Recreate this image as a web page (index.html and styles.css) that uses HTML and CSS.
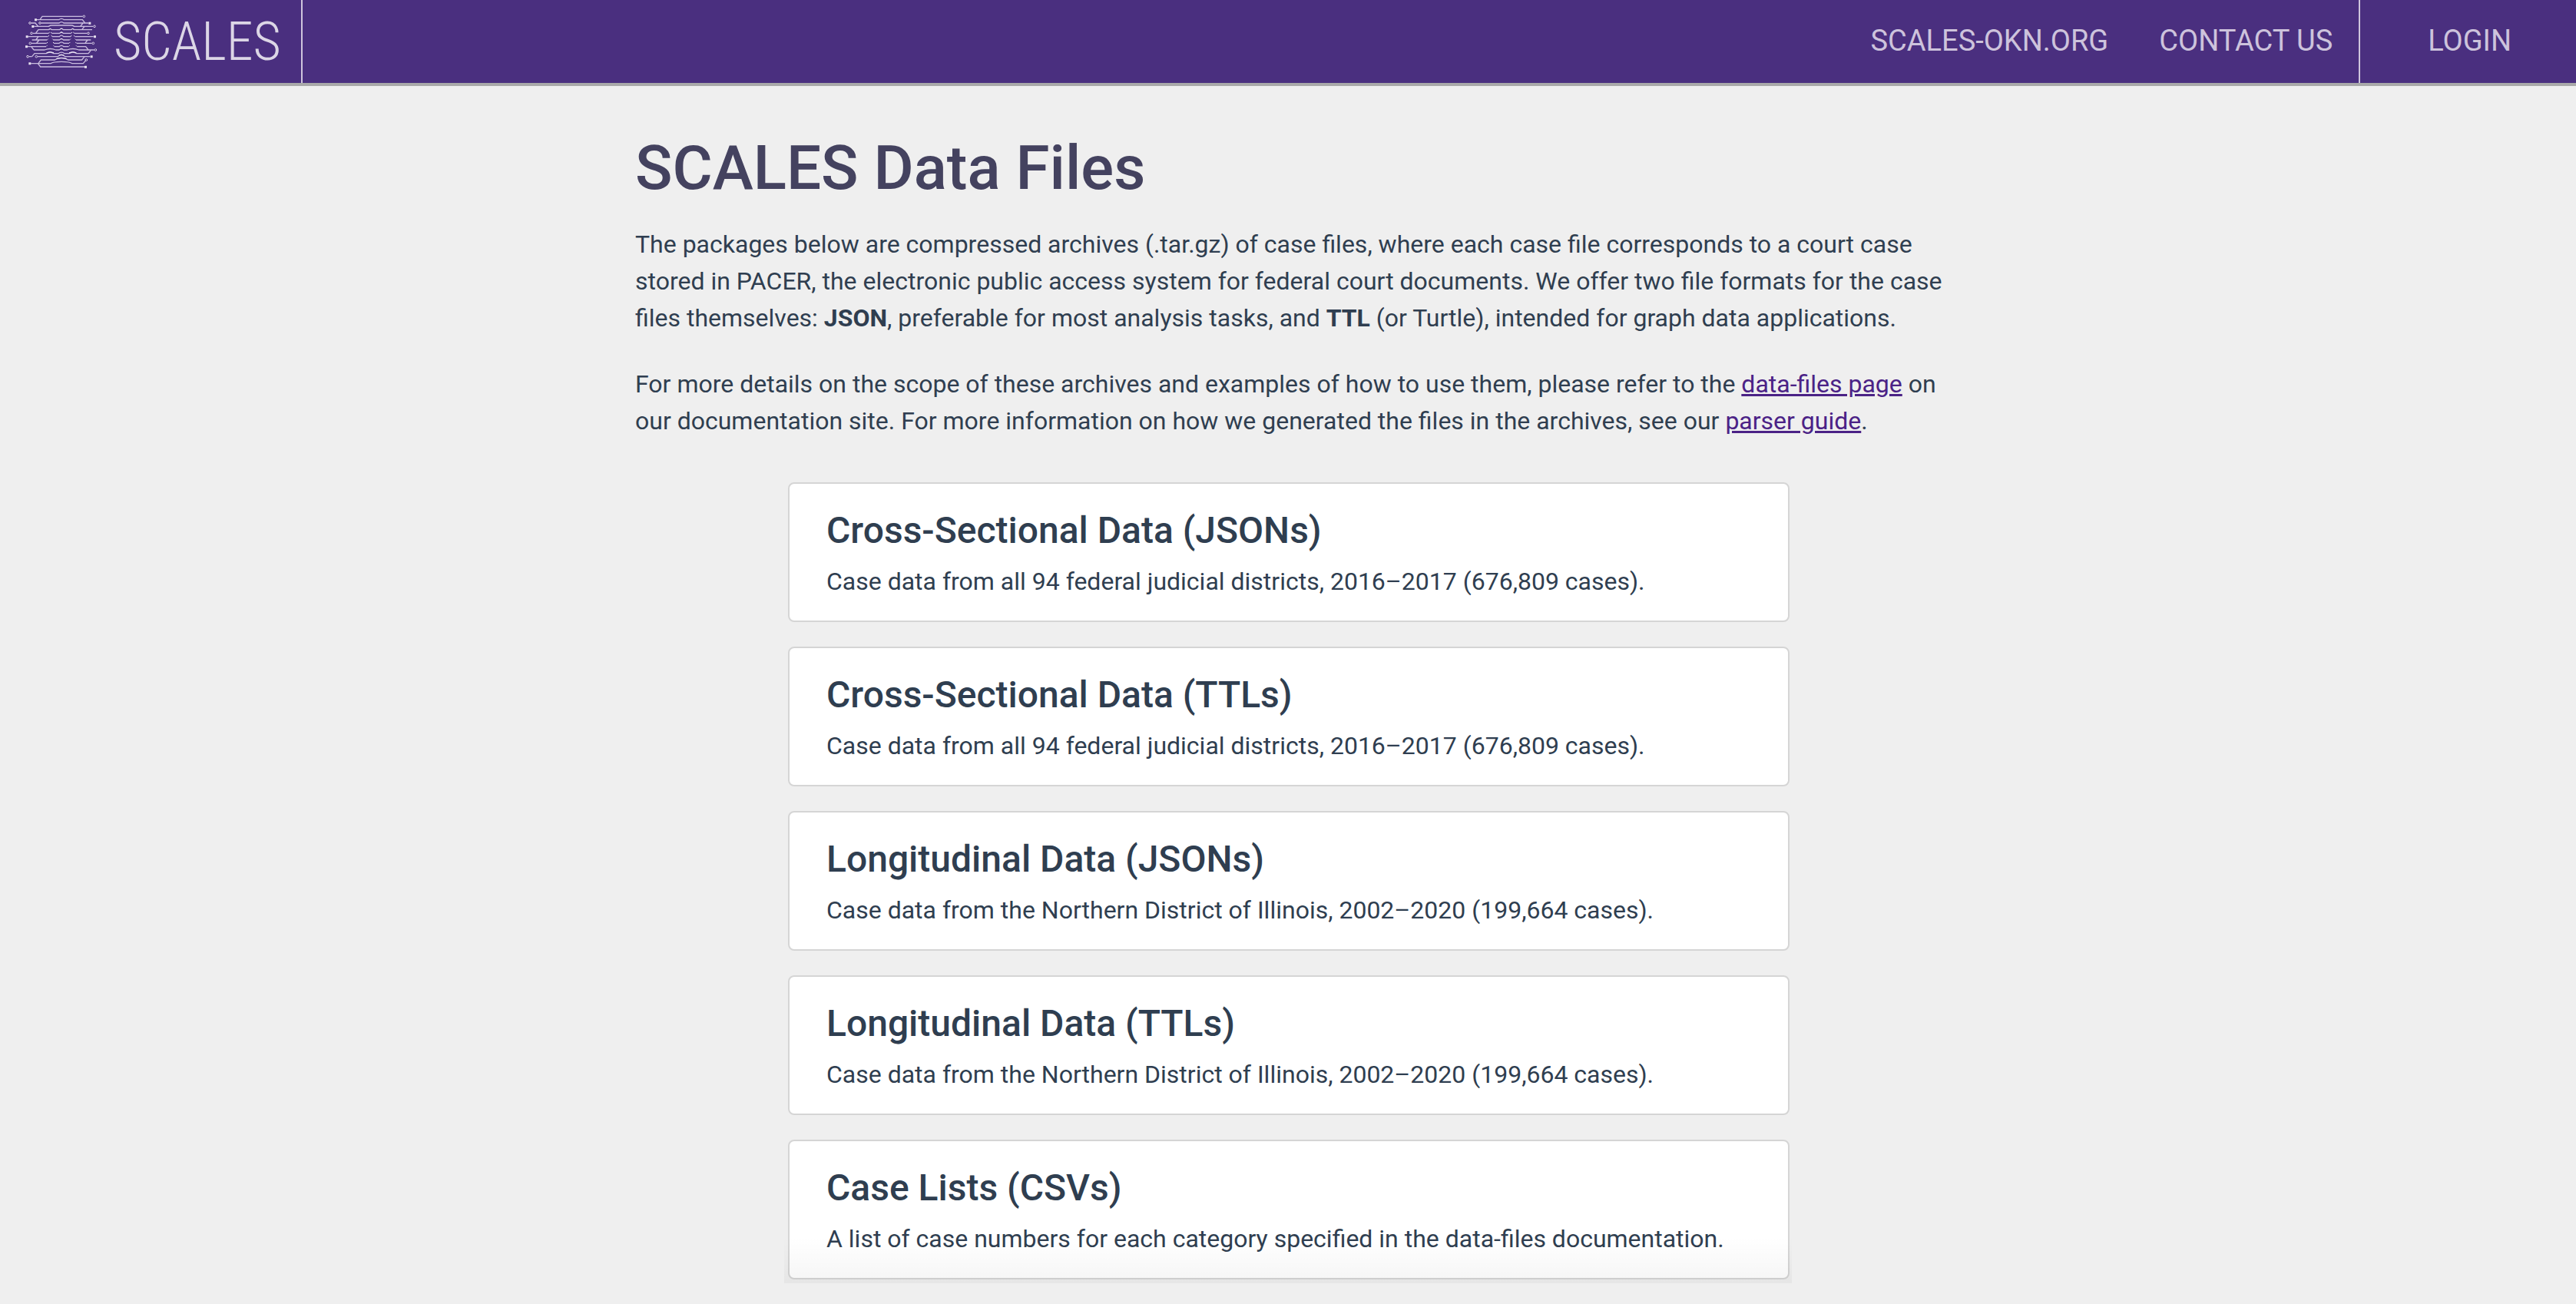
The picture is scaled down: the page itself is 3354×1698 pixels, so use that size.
FILE: index.html
```html
<!DOCTYPE html>
<html lang="en">
<head>
<meta charset="utf-8">
<title>SCALES Data Files</title>
<link rel="stylesheet" href="styles.css">
</head>
<body>
<header class="topbar">
  <a class="brand" href="#">
    <svg class="brand-mark" viewBox="96 50 288 216" aria-hidden="true">
      <g class="trace">
        <path d="M156 73l9-13h158"/>
        <path d="M144 73h86q10-8 20 0h72l10 13"/>
        <path d="M122 86h16l11 13"/>
        <path d="M161 86h70q9-8 18 0h96"/>
        <path d="M133 99h57q6-4 12-4h76q6 0 12 4h24l10-13M290 99h73"/>
        <path d="M140 125l10-13h40q6-8 12 0h31q7-9 14 0h31q6-8 12 0h70M320 112l10-13"/>
        <path d="M128 126h62M202 126h31q7-9 14 0h31M290 126h50"/>
        <path d="M110 139h77M204 139h28q8-9 16 0h28M293 139h72M150 139l-10 13"/>
        <path d="M125 152h59M208 152h24q8-8 16 0h24M297 152h58M143 164l10-12M342 152l-9 12"/>
        <path d="M123 165h59M210 165h21q9-9 18 0h21M299 165h60"/>
        <path d="M108 178h72M212 178h19q9-8 18 0h19M301 178h34l10 13M122 178l10 13"/>
        <path d="M132 191h42q22-9 44 0h13q9-7 18 0h13q22-9 46 0h60"/>
        <path d="M125 217l10-12h45q15-10 30 0h18q12-9 24 0h18q15-10 30 0h45l10-13"/>
        <path d="M113 217h12M147 217h78q15-12 30 0h97"/>
        <path d="M150 243l10-13h54q10-7 26-7t26 7h54l10-13"/>
        <path d="M121 244h77q8-7 42-7t42 7h43l10-12"/>
        <path d="M148 244l10 13h172"/>
      </g>
      <g class="shade">
        <path d="M193 111q3-5 6 0M281 111q3-5 6 0M190 125l4-3M202 125l-4-3M278 125l4-3M290 125l-4-3M188 138l4-3M204 138l-4-3M276 138l4-3M292 138l-4-3M185 151l3-3M208 151l-3-3M273 151l3-3M296 151l-3-3M183 164l3-3M210 164l-3-3M271 164l3-3M298 164l-3-3M181 177l3-3M212 177l-3-3M269 177l3-3M300 177l-3-3"/>
        <path d="M182 202q14-6 28 0M270 202q14-6 28 0M220 225q20-6 40 0M236 110q4-5 8 0M236 124q4-5 8 0M236 149q4-5 8 0M235 187q5-4 10 0M230 212q10-6 20 0"/>
      </g>
      <g class="ring">
        <circle cx="328" cy="60" r="4"/><circle cx="117" cy="86" r="4"/><circle cx="156" cy="86" r="4"/>
        <circle cx="369" cy="99" r="4"/><circle cx="123" cy="126" r="4"/><circle cx="345" cy="126" r="4"/>
        <circle cx="118" cy="165" r="4"/><circle cx="364" cy="165" r="4"/><circle cx="373" cy="191" r="4"/>
        <circle cx="108" cy="217" r="4"/><circle cx="142" cy="217" r="4"/><circle cx="337" cy="230" r="4"/>
      </g>
      <path class="pad" d="M135 69h9v9h-9zM346 82h9v9h-9zM124 95h9v9h-9zM101 135h9v9h-9zM366 135h9v9h-9zM99 174h9v9h-9zM353 213h9v9h-9zM112 240h9v9h-9zM330 253h9v9h-9z"/>
    </svg>
    <span class="brand-name">SCALES</span>
  </a>
  <nav class="nav">
    <a href="#">SCALES-OKN.ORG</a>
    <a href="#">CONTACT US</a>
    <a class="login" href="#">LOGIN</a>
  </nav>
</header>
<main class="page">
  <h1>SCALES Data Files</h1>
  <p>The packages below are compressed archives (.tar.gz) of case files, where each case file corresponds to a court case stored in PACER, the electronic public access system for federal court documents. We offer two file formats for the case files themselves: <strong>JSON</strong>, preferable for most analysis tasks, and <strong>TTL</strong> (or Turtle), intended for graph data applications.</p>
  <p>For more details on the scope of these archives and examples of how to use them, please refer to the <a href="#">data-files page</a> on our documentation site. For more information on how we generated the files in the archives, see our <a href="#">parser guide</a>.</p>
  <section class="files">
    <article class="card">
      <h2>Cross-Sectional Data (JSONs)</h2>
      <p>Case data from all 94 federal judicial districts, 2016–2017 (676,809 cases).</p>
    </article>
    <article class="card">
      <h2>Cross-Sectional Data (TTLs)</h2>
      <p>Case data from all 94 federal judicial districts, 2016–2017 (676,809 cases).</p>
    </article>
    <article class="card">
      <h2>Longitudinal Data (JSONs)</h2>
      <p>Case data from the Northern District of Illinois, 2002–2020 (199,664 cases).</p>
    </article>
    <article class="card">
      <h2>Longitudinal Data (TTLs)</h2>
      <p>Case data from the Northern District of Illinois, 2002–2020 (199,664 cases).</p>
    </article>
    <article class="card">
      <h2>Case Lists (CSVs)</h2>
      <p>A list of case numbers for each category specified in the data-files documentation.</p>
    </article>
  </section>
</main>
</body>
</html>
```
FILE: styles.css
```css
* { box-sizing: border-box; }

body {
  margin: 0;
  background: #efefef;
  color: #2f3e50;
  font: 400 32px/48px Roboto, "Liberation Sans", sans-serif;
}

h1, h2, p { margin: 0; }

.topbar {
  display: flex;
  justify-content: space-between;
  height: 112px;
  background: #4a2f7f;
  border-bottom: 4px solid #a9a9a9;
}

.brand {
  display: flex;
  align-items: center;
  gap: 20px;
  padding: 0 26px 0 32px;
  border-right: 2px solid #cfc5dd;
  color: #dcd6e6;
  text-decoration: none;
}

.brand-mark { width: 96px; height: 72px; }
.trace, .shade, .ring { fill: none; stroke: #cabddf; stroke-width: 4; }
.shade { stroke: #f4f1f8; stroke-width: 3; }
.ring { stroke: #d6cce4; stroke-width: 3; }
.pad { fill: #e6e0ee; }

.brand-name {
  font-family: "Roboto Condensed", Roboto, sans-serif;
  font-size: 70px;
  font-weight: 300;
  line-height: 72px;
}

.nav {
  display: flex;
  gap: 2px;
}

.nav a {
  display: flex;
  align-items: center;
  padding: 0 32px 2px;
  color: #cdc3dc;
  font-size: 38px;
  text-decoration: none;
}

.nav .login {
  padding: 0 84px 2px 88px;
  border-left: 2px solid #cfc5dd;
}

.page {
  max-width: 1700px;
  margin: 0 auto;
  padding: 59px 0 27px;
}

h1 {
  margin-bottom: 27px;
  color: #44425f;
  font-size: 80px;
  font-weight: 500;
  line-height: 96px;
}

.page > p { margin: 0 -8px 38px 0; }
.page a { color: #4b2286; }
strong { font-weight: 700; }

.files {
  position: relative;
  display: grid;
  gap: 32px;
  max-width: 1312px;
  margin: 56px auto 0;
  padding: 0 3px 5px 5px;
}

/* Soft shadow at the foot of the list */
.files::after {
  content: "";
  position: absolute;
  inset: auto 0 0;
  height: 60px;
  background: linear-gradient(transparent, rgba(0, 0, 0, .04));
  pointer-events: none;
}

.card {
  padding: 32px 48px 27px;
  background: #fff;
  border: 2px solid #d5d5d5;
  border-radius: 8px;
}

.card h2 {
  margin-bottom: 13px;
  font-size: 48px;
  font-weight: 500;
  line-height: 58px;
}
```
